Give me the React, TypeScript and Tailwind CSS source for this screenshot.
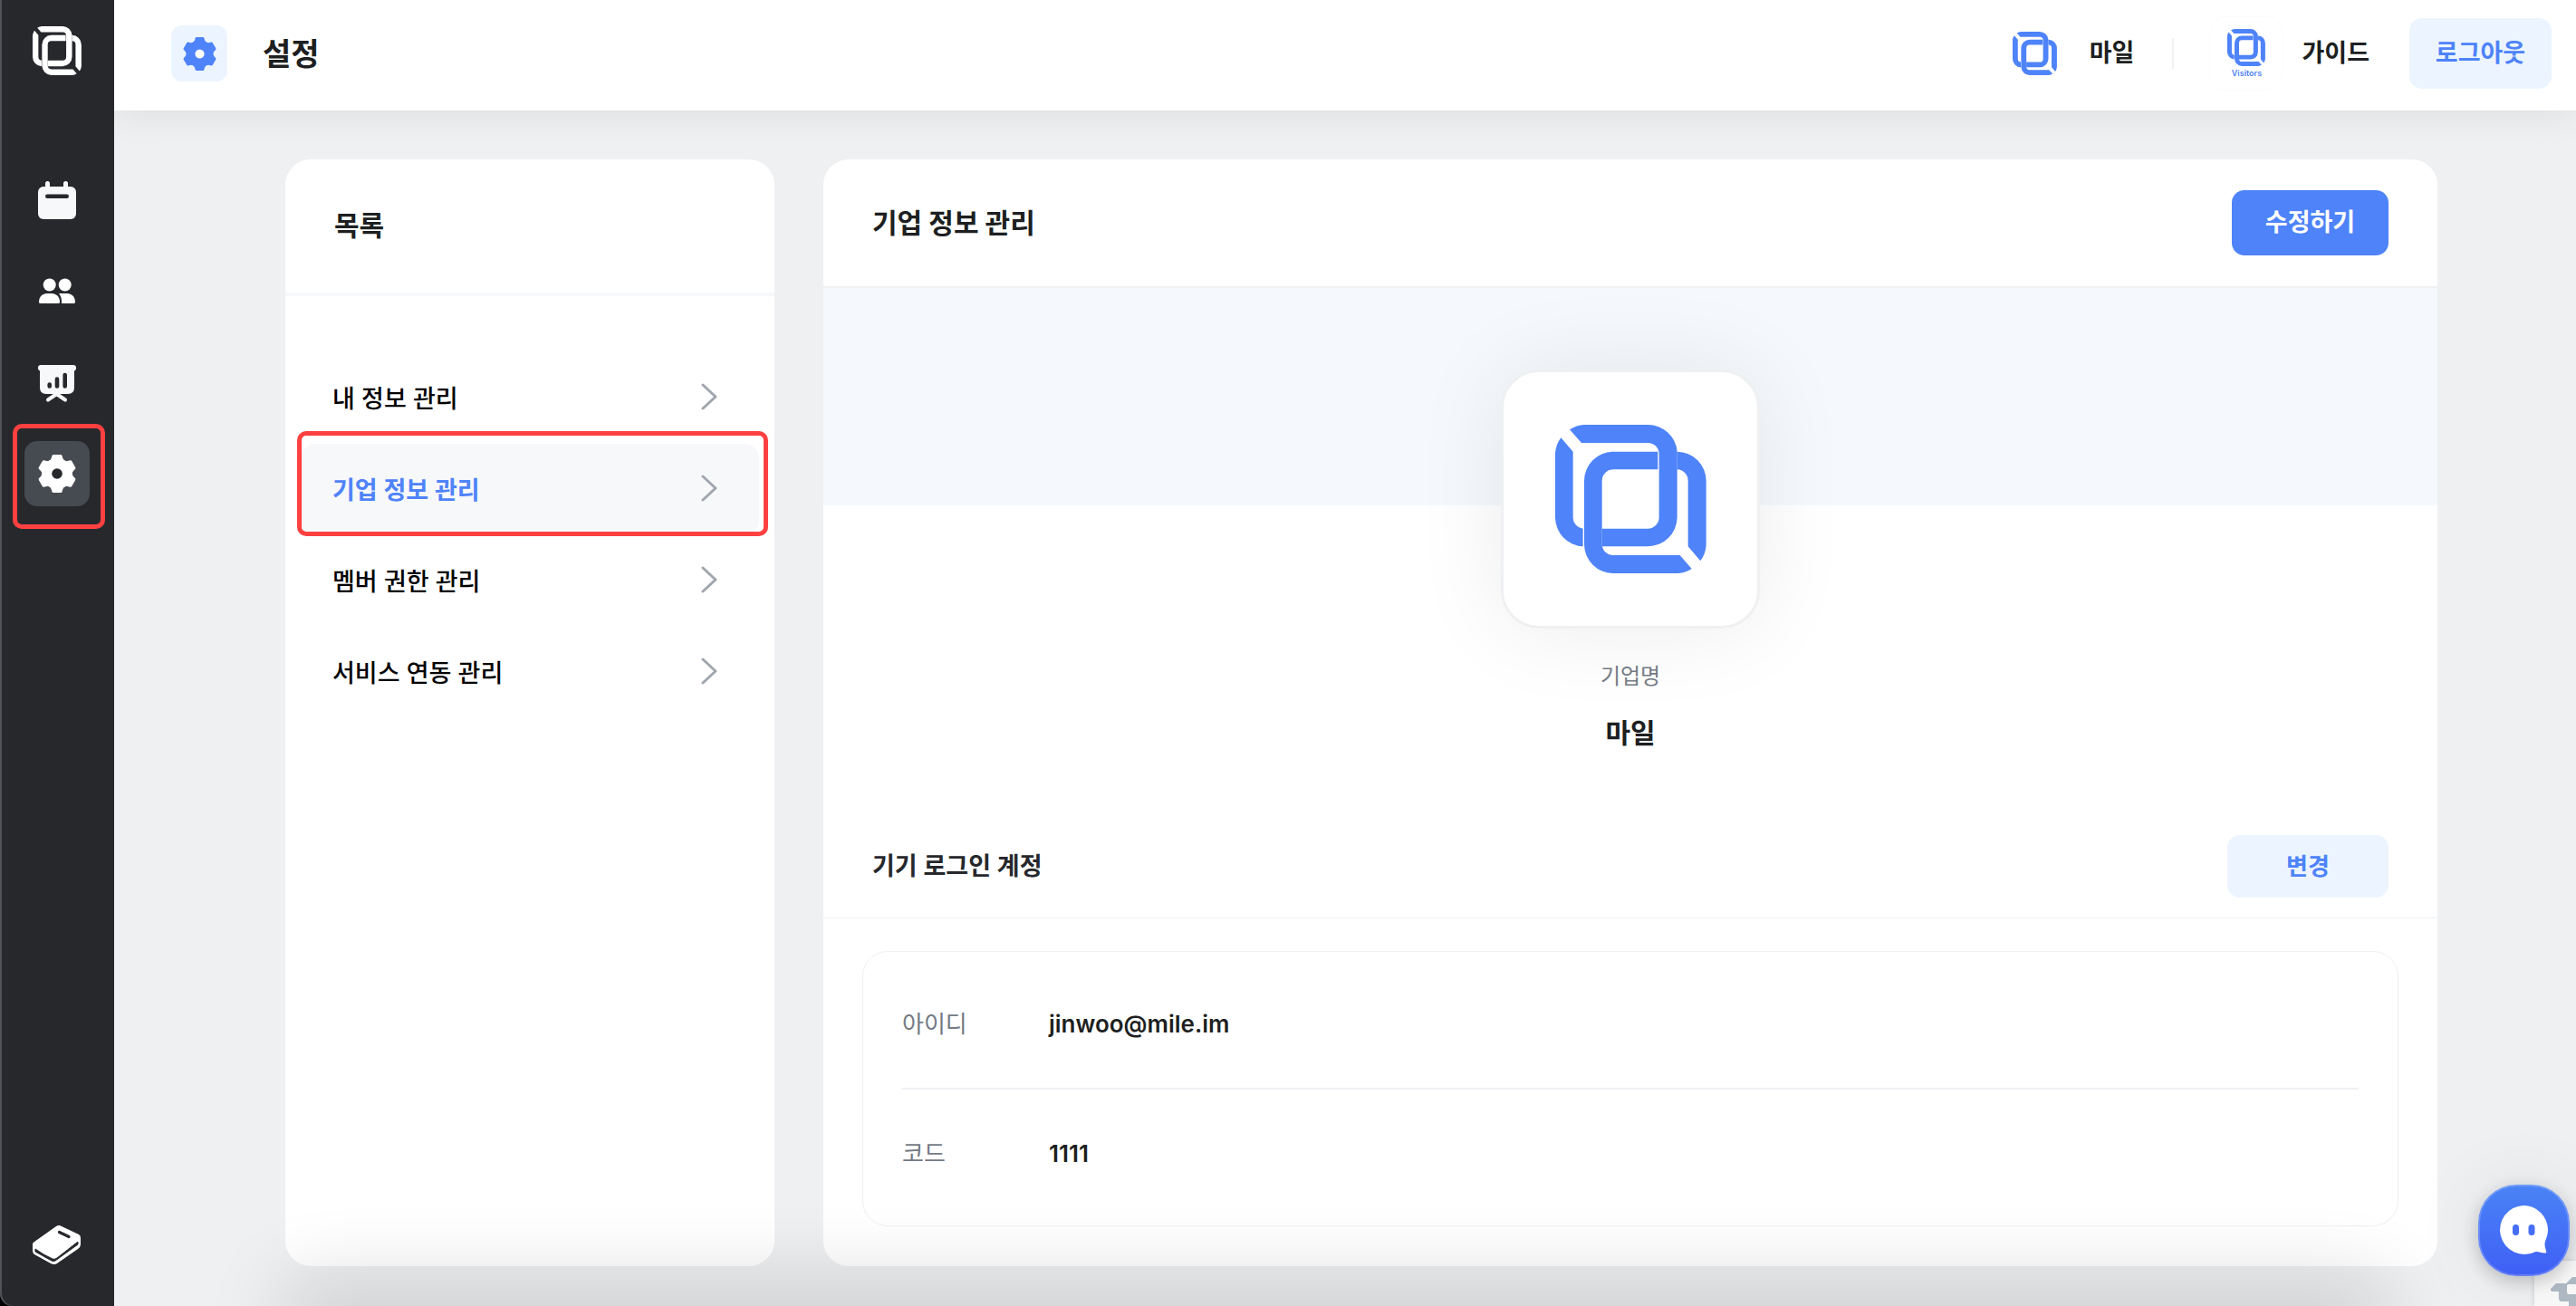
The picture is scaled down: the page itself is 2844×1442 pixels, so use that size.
import type { ReactNode } from "react";

const FONT = "font-[Inter,'Noto_Sans_CJK_KR',sans-serif]";

function Logo({ className }: { className: string }) {
  return (
    <svg viewBox="349 267 501 492" fill="currentColor" preserveAspectRatio="none" className={className} aria-hidden="true">
      <path d="M397 283A97 97 0 0 1 445 267H656A97 97 0 0 1 753 356V573A97 97 0 0 1 656 670H504V611H656A37 37 0 0 0 693 574V364A37 37 0 0 0 656 327H436Z" />
      <path d="M368 310L408 356V574A37 37 0 0 0 441 611V670A97 97 0 0 1 349 574V360A97 97 0 0 1 368 310Z" />
      <path d="M689 356V415H541A37 37 0 0 0 504 452V662A37 37 0 0 0 541 699H762L801 744A97 97 0 0 1 756 759H541A97 97 0 0 1 445 662V453A97 97 0 0 1 541 356Z" />
      <path d="M753 356A97 97 0 0 1 849 453V667A97 97 0 0 1 830 718L789 670V452A37 37 0 0 0 753 415Z" />
    </svg>
  );
}

function Gear({ className, hole }: { className: string; hole: string }) {
  return (
    <svg viewBox="-21 -21 42 42" fill="currentColor" className={className} aria-hidden="true">
      <circle r="17" />
      {[0, 60, 120, 180, 240, 300].map((angle) => (
        <path key={angle} transform={`rotate(${angle})`} d="M-10 -13Q-6.800 -14.500 -6 -18L-5.700 -19.500Q-5.300 -21 -4 -21H4Q5.300 -21 5.700 -19.500L6 -18Q6.800 -14.500 10 -13Z" />
      ))}
      <circle r="5.800" fill={hole} />
    </svg>
  );
}

function CalendarIcon() {
  return (
    <svg viewBox="0 2 44 44" className="size-11 overflow-visible text-[#f7f8fa]" fill="currentColor" aria-hidden="true">
      <rect x="1" y="7" width="42" height="36" rx="6" />
      <rect x="9" y="1" width="5" height="12" rx="2.500" />
      <rect x="29" y="1" width="5" height="12" rx="2.500" />
      <rect x="9" y="15.500" width="26" height="4.500" rx="2.200" fill="#26282c" />
    </svg>
  );
}

function PeopleIcon() {
  return (
    <svg viewBox="0 2 44 44" className="size-11 text-white" fill="currentColor" aria-hidden="true">
      <circle cx="13.700" cy="15.500" r="7" />
      <circle cx="30.700" cy="15.500" r="7" />
      <path d="M2 34.500C2 28.500 6 25 11 25H16C21 25 25 28.500 25 34.500Q25 36 23.500 36H3.500Q2 36 2 34.500Z" />
      <path d="M24 25H33C38 25 42 28.500 42 34.500Q42 36 40.500 36H27V34C27 30 26 27.500 24 25Z" />
    </svg>
  );
}

function ChartIcon() {
  return (
    <svg viewBox="0 0 44 44" className="size-11 text-[#f7f8fa]" fill="currentColor" aria-hidden="true">
      <rect x="1" y="2" width="42" height="6.500" rx="3" />
      <path d="M3 5H41V27Q41 34 34 34H10Q3 34 3 27Z" />
      <path d="M21.500 34L12 40.500M21.500 34L31 40.500" stroke="currentColor" strokeWidth="4" strokeLinecap="round" />
      <g stroke="#26282c" strokeWidth="4.600" strokeLinecap="round">
        <path d="M13.700 23.500V25.500M22 17.500V25.500M30.700 13V25.500" />
      </g>
    </svg>
  );
}

function BookIcon() {
  return (
    <svg viewBox="36 1353 53 43" className="h-[43px] w-[53px] overflow-visible text-white" fill="currentColor" aria-hidden="true">
      <path d="M61 1354Q64 1352 67 1354L86 1363Q88 1364 88 1367V1374Q88 1377 85 1379L62 1395Q59 1397 55 1395L37 1385Q35 1384 35 1380V1374Q35 1372 37 1371Z" />
      <path d="M38 1379Q46 1385 57 1390Q59 1391 62 1389L85 1371V1374L60 1392Q58 1393 56 1392L38 1382Z" fill="#26282c" stroke="#26282c" strokeWidth="1" />
      <path d="M64.500 1360.500L75 1365.500" stroke="#26282c" strokeWidth="3.200" strokeLinecap="round" />
    </svg>
  );
}

function Chevron() {
  return (
    <svg viewBox="0 0 18 30" className="h-[30px] w-[18px] text-[#a0a6ae]" fill="none" stroke="currentColor" strokeWidth="3" strokeLinecap="round" strokeLinejoin="round" aria-hidden="true">
      <path d="M2 2L16 15L2 28" />
    </svg>
  );
}

function Highlight({ className }: { className: string }) {
  return <span className={`pointer-events-none absolute rounded-[10px] border-[5px] border-[#ff4040] ${className}`} />;
}

function NavLink({ label, active, children }: { label: string; active?: boolean; children: ReactNode }) {
  return (
    <a
      href="#"
      aria-label={label}
      className={`relative flex size-[72px] items-center justify-center rounded-[14px] ${active ? "bg-[#464b51]" : ""}`}
    >
      {children}
      {active && <Highlight className="-top-[19px] -left-[13px] h-[116px] w-[102px]" />}
    </a>
  );
}

function Sidebar() {
  return (
    <div className="z-20 flex w-[126px] shrink-0 bg-black">
      <aside className="flex w-full flex-col items-center rounded-bl-[14px] bg-[#26282c] pt-[29px] pb-[46px] shadow-[inset_2px_0_0_#515358]">
        <a href="#" aria-label="Visitors">
          <Logo className="size-[54px] text-white" />
        </a>
        <nav className="mt-[104px] flex flex-col gap-7">
          <NavLink label="일정">
            <CalendarIcon />
          </NavLink>
          <NavLink label="멤버">
            <PeopleIcon />
          </NavLink>
          <NavLink label="통계">
            <ChartIcon />
          </NavLink>
          <NavLink label="설정" active>
            <Gear className="size-[42px] text-white" hole="#26282c" />
          </NavLink>
        </nav>
        <a href="#" aria-label="도움말" className="mt-auto">
          <BookIcon />
        </a>
      </aside>
    </div>
  );
}

function Header() {
  return (
    <header className="z-10 flex h-[122px] shrink-0 items-center bg-white pr-[27px] pb-1 pl-[63px] shadow-[0_4px_40px_rgba(0,0,0,0.08)]">
      <span className="flex size-[62px] items-center justify-center rounded-xl bg-[#ecf5ff]">
        <Gear className="size-[37px] text-[#4e83f9]" hole="#ffffff" />
      </span>
      <h1 className="ml-[39px] text-[34px] font-bold text-[#1d1f21]">설정</h1>
      <div className="ml-auto flex items-center text-[27px] font-semibold text-[#1d1f21]">
        <a href="#" className="flex items-center gap-9">
          <Logo className="h-12 w-[49px] text-[#4e83f9]" />
          마일
        </a>
        <span className="ml-[42px] h-[34px] w-0.5 bg-[#eff0f2]" />
        <a href="#" className="ml-[39px] flex items-center">
          <span className="flex size-[82px] flex-col items-center justify-center rounded-[20px] border border-[#fcfcfc] text-[#4e83f9]">
            <Logo className="h-[41px] w-[42px]" />
            <span className="mt-0.5 text-[9px] leading-3 font-semibold">Visitors</span>
          </span>
          <span className="ml-5">가이드</span>
        </a>
        <button className="ml-11 h-[78px] w-[157px] rounded-[14px] bg-[#ecf5ff] text-[#4e83f9]">로그아웃</button>
      </div>
    </header>
  );
}

const MENU = [
  { label: "내 정보 관리" },
  { label: "기업 정보 관리", active: true },
  { label: "멤버 권한 관리" },
  { label: "서비스 연동 관리" },
];

function MenuCard() {
  return (
    <section className="flex w-[540px] shrink-0 flex-col rounded-[28px] bg-white">
      <h2 className="flex h-[151px] items-center border-b-4 border-[#f7f8fa] px-[54px] text-[30px] font-bold text-[#1d1f21]">목록</h2>
      <nav className="flex flex-col px-[17px] pt-[62px] text-[27px]">
        {MENU.map((item) => (
          <a
            key={item.label}
            href="#"
            className={`relative flex h-[101px] items-center justify-between rounded-2xl pr-[46px] pb-1 pl-[35px] ${
              item.active ? "bg-[#f7f8fa] font-semibold text-[#4e83f9]" : "font-medium text-black"
            }`}
          >
            <span className="pt-2">{item.label}</span>
            <Chevron />
            {item.active && <Highlight className="-top-[14px] -left-1 h-[116px] w-[520px]" />}
          </a>
        ))}
      </nav>
    </section>
  );
}

function DetailRow({ label, value }: { label: string; value: string }) {
  return (
    <div className="flex items-center text-[26px]">
      <dt className="w-[162px] text-[#737a84]">{label}</dt>
      <dd className="font-semibold text-[#1d1f21]">{value}</dd>
    </div>
  );
}

function CompanyCard() {
  return (
    <section className="flex min-w-0 flex-1 flex-col rounded-[28px] bg-white">
      <div className="flex h-[142px] items-center justify-between border-b-2 border-[#eff0f2] px-[54px]">
        <h2 className="text-[30px] font-bold text-[#1d1f21]">기업 정보 관리</h2>
        <button className="h-[72px] w-[173px] rounded-[14px] bg-[#4e83f9] text-[27px] font-semibold text-white">수정하기</button>
      </div>
      <div className="h-60 bg-[#f5f9fe]" />
      <div className="-mt-[150px] flex flex-col items-center">
        <div className="flex size-[286px] items-center justify-center rounded-[42px] border-[3px] border-[#eff0f2] bg-white shadow-[0_0_100px_rgba(0,0,0,0.08)]">
          <Logo className="h-[164px] w-[167px] text-[#4e83f9]" />
        </div>
        <p className="relative mt-[35px] text-[24px] leading-9 text-[#737a84]">기업명</p>
        <p className="relative mt-6 text-[30px] leading-10 font-bold text-[#1d1f21]">마일</p>
      </div>
      <div className="mt-[93px] flex h-[92px] items-start justify-between border-b border-[#eff0f2] px-[54px]">
        <h3 className="text-[27px] leading-[69px] font-semibold text-[#26282c]">기기 로그인 계정</h3>
        <button className="h-[69px] w-[178px] rounded-[14px] bg-[#ecf5ff] text-[26px] font-bold text-[#4e83f9]">변경</button>
      </div>
      <dl className="mx-[43px] mt-9 mb-11 flex h-[304px] flex-col justify-between rounded-[28px] border border-[#eff0f2] px-[43px] py-[60px]">
        <DetailRow label="아이디" value="jinwoo@mile.im" />
        <div className="h-0.5 bg-[#eff0f2]" />
        <DetailRow label="코드" value="1111" />
      </dl>
    </section>
  );
}

function ChatButton() {
  return (
    <button
      aria-label="채팅 상담"
      className="fixed right-[7px] bottom-[33px] z-40 flex size-[101px] items-center justify-center rounded-[42px] border-2 border-white/20 bg-linear-to-b from-[#4a83f6] to-[#405ef5] bg-origin-border shadow-[0_6px_20px_rgba(0,0,0,0.2),0_0_80px_rgba(0,0,0,0.08)]"
    >
      <svg viewBox="1 1 56 56" className="size-14 overflow-visible" aria-hidden="true">
        <path fill="#ffffff" d="M28 1A27 27 0 0 1 55 28C55 35 51.500 40 51.500 44C51.500 48 53.500 51 53.300 53.300C49 54.500 45 51.500 41 52.200A27 27 0 1 1 28 1Z" />
        <rect x="16" y="22" width="7" height="12" rx="3.500" fill="#466ff6" />
        <rect x="33.500" y="22" width="7" height="12" rx="3.500" fill="#466ff6" />
      </svg>
    </button>
  );
}

function CaptchaBadge() {
  return (
    <div className="fixed right-0 bottom-0 z-30 h-[50px] w-[46px] overflow-hidden bg-[#f9f9f9] shadow-[0_0_6px_rgba(0,0,0,0.15)]">
      <svg viewBox="0 0 46 50" className="h-[50px] w-[46px]" aria-hidden="true">
        <path fill="#b0bac5" d="M18 31L24 25H35L42 18H46V50H38V45H29L27 43V34H20L18 33Z" />
        <rect x="36" y="26" width="12" height="11" rx="2" fill="#f9f9f9" />
      </svg>
    </div>
  );
}

export default function App() {
  return (
    <div className={`relative flex min-h-screen overflow-hidden bg-[#eff0f2] ${FONT}`}>
      <Sidebar />
      <div className="relative flex min-w-0 flex-1 flex-col">
        <Header />
        <main className="flex flex-1 gap-[54px] pt-[54px] pr-[153px] pb-11 pl-[189px]">
          <MenuCard />
          <CompanyCard />
        </main>
        <div className="pointer-events-none absolute right-[230px] -bottom-5 left-[210px] h-5 shadow-[0_0_90px_20px_rgba(0,0,0,0.2)]" />
      </div>
      <ChatButton />
      <CaptchaBadge />
    </div>
  );
}
